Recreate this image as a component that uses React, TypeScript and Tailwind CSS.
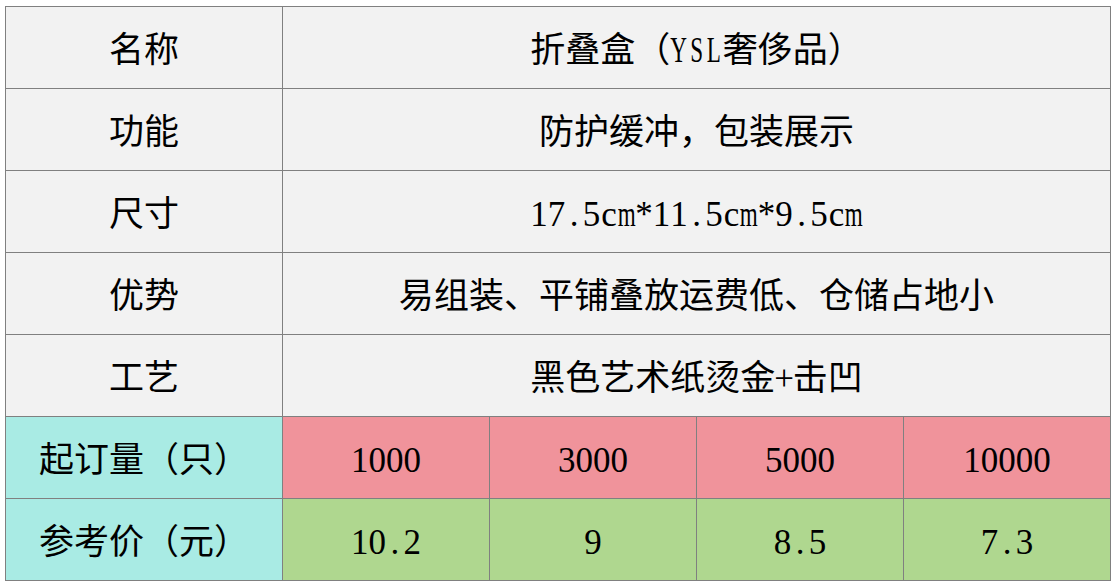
import React from "react";

const CJK = "font-['Liberation_Serif','Noto_Sans_CJK_SC',serif]";

function Mono({ text }: { text: string }) {
  return (
    <span className="inline-flex items-baseline">
      {text.split("").map((c, i) => {
        const ascii = c.charCodeAt(0) < 128;
        if (!ascii) return <span key={i}>{c}</span>;
        const wide = c === "m" || /[A-Z]/.test(c);
        return (
          <span key={i} className="inline-flex w-[0.5em] justify-center overflow-visible">
            {wide ? <span className="inline-block scale-x-[0.66]">{c}</span> : c}
          </span>
        );
      })}
    </span>
  );
}

function Cell({ children, bg, span }: { children: React.ReactNode; bg: string; span?: boolean }) {
  return (
    <div className={`${bg} ${span ? "col-span-4" : ""} flex items-center justify-center pt-[5px] text-[35px] leading-none text-black whitespace-nowrap`}>
      {children}
    </div>
  );
}

export default function App() {
  const rows: [string, string][] = [
    ["名称", "折叠盒（YSL奢侈品）"],
    ["功能", "防护缓冲，包装展示"],
    ["尺寸", "17.5cm*11.5cm*9.5cm"],
    ["优势", "易组装、平铺叠放运费低、仓储占地小"],
    ["工艺", "黑色艺术纸烫金+击凹"],
  ];
  const qty = ["1000", "3000", "5000", "10000"];
  const price = ["10.2", "9", "8.5", "7.3"];
  return (
    <div className={`w-[1114px] h-[584px] bg-white pl-[5px] pt-[6px] ${CJK}`}>
      <div className="grid w-fit grid-cols-[276px_206px_206px_206px_206px] auto-rows-[81px] gap-px bg-[#808080] p-px">
        {rows.map(([k, v]) => (
          <React.Fragment key={k}>
            <Cell bg="bg-[#f2f2f2]">{k}</Cell>
            <Cell bg="bg-[#f2f2f2]" span>
              <Mono text={v} />
            </Cell>
          </React.Fragment>
        ))}
        <Cell bg="bg-[#a9ebe4]">起订量（只）</Cell>
        {qty.map((q) => (
          <Cell key={q} bg="bg-[#f0939b]">
            <Mono text={q} />
          </Cell>
        ))}
        <Cell bg="bg-[#a9ebe4]">参考价（元）</Cell>
        {price.map((p) => (
          <Cell key={p} bg="bg-[#afd78f]">
            <Mono text={p} />
          </Cell>
        ))}
      </div>
    </div>
  );
}
